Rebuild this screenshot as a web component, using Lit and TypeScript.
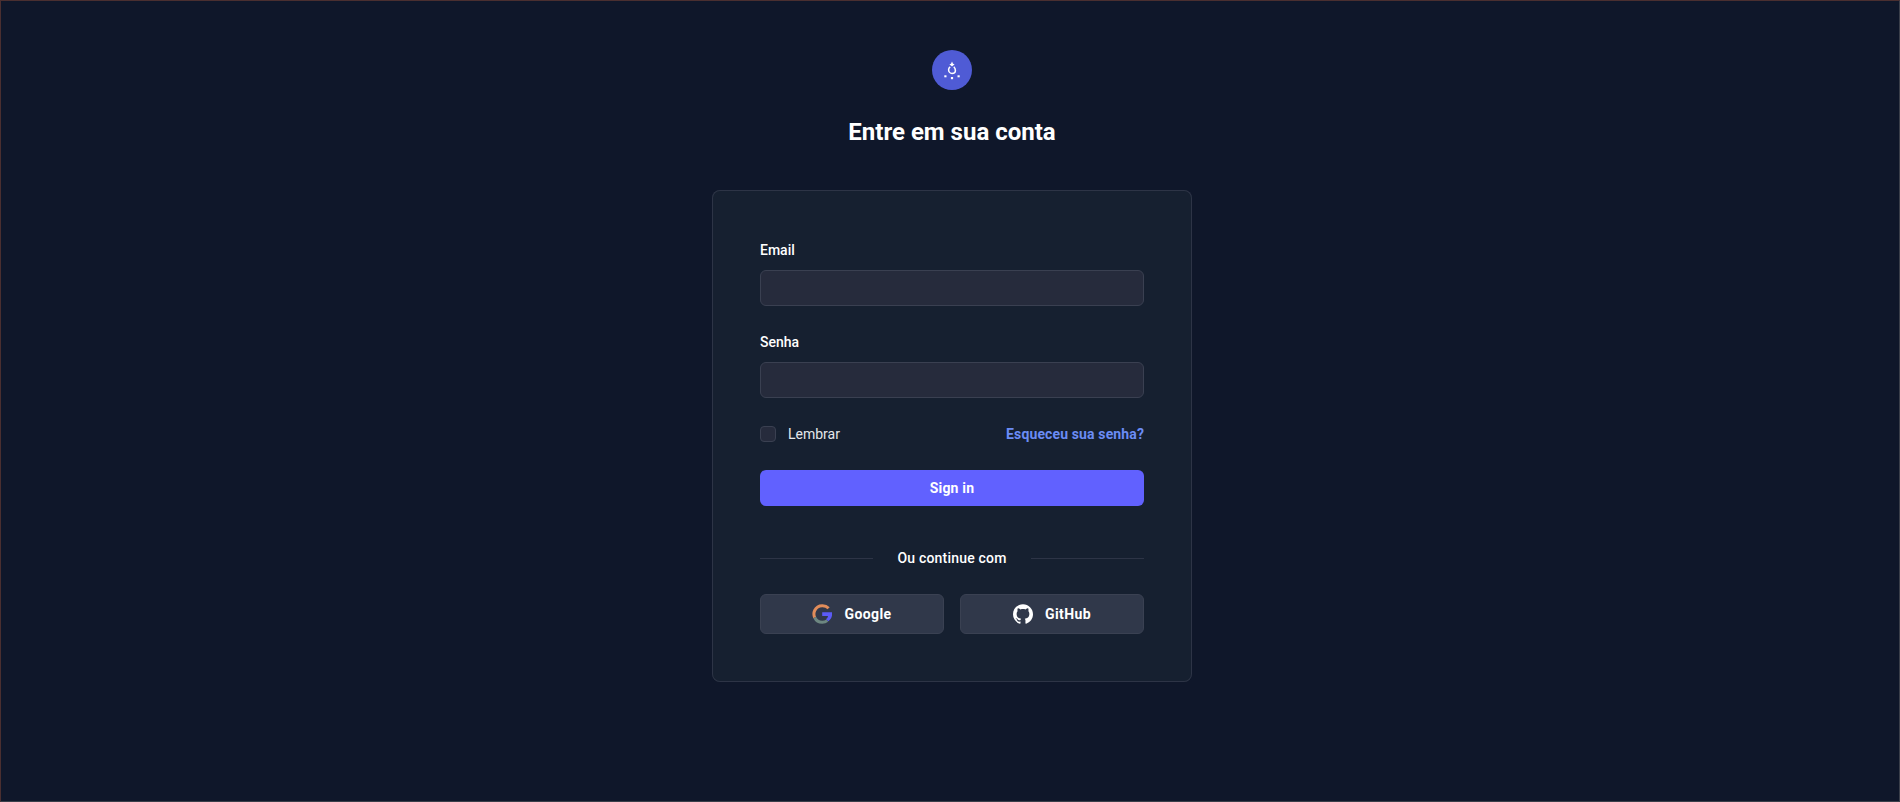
import { css, html, LitElement } from 'lit'
import { customElement } from 'lit/decorators.js'

@customElement('app-root')
export class AppRoot extends LitElement {
  render() {
    return html`
      <main class="page">
        <header class="brand">
          <div class="logo">
            <svg width="40" height="40" viewBox="0 0 40 40" fill="none">
              <path d="M20 11.500l1 2.300 1.600.5-1.400 1.100-1.200 1.100-1.200-1.100-1.400-1.100 1.600-.5z" fill="#fff" />
              <path d="M18.200 16.800c-1.200.9-1.600 2-1.600 3 0 1.900 1.500 3.700 3.400 3.700s3.400-1.200 3.400-3c0-1.300-.6-2.700-1.600-3.700" stroke="#fff" stroke-width="1.500" />
              <rect x="12.300" y="25.300" width="2.200" height="2" fill="#fff" />
              <rect x="18.900" y="27" width="2.200" height="2.200" fill="#fff" />
              <rect x="25.500" y="25.300" width="2.200" height="2" fill="#fff" />
            </svg>
          </div>
          <h1>Entre em sua conta</h1>
        </header>
        <section class="card">
          <form class="form">
            <div class="field">
              <label for="email">Email</label>
              <input id="email" type="email" />
            </div>
            <div class="field">
              <label for="senha">Senha</label>
              <input id="senha" type="password" />
            </div>
            <div class="options">
              <label class="remember"><span class="check"></span>Lembrar</label>
              <a class="forgot" href="#">Esqueceu sua senha?</a>
            </div>
            <button class="submit" type="button">Sign in</button>
          </form>
          <div class="divider"><span class="line"></span><span class="divider-text">Ou continue com</span><span class="line"></span></div>
          <div class="socials">
            <a class="social" href="#">
              <svg width="20" height="20" viewBox="0 0 20 20" fill="none">
                <path d="M16.600 4.300A8.300 8.300 0 0 0 10.300 1.700 8.300 8.300 0 0 0 2.700 6.500 8.300 8.300 0 0 0 2.700 13.500" stroke="#e08c5a" stroke-width="3" />
                <path d="M2.700 13.500A8.300 8.300 0 0 0 10.300 18.300 8.300 8.300 0 0 0 15.300 16.600" stroke="#6d8781" stroke-width="3" />
                <path d="M10.200 8.300H20V11.500C19.600 13.800 18.300 15.700 16.300 17.200L14 15.200C15 14.500 15.800 13.500 16 12H10.200z" fill="#5b5bf6" />
              </svg>
              <span>Google</span>
            </a>
            <a class="social" href="#">
              <svg width="20" height="20" viewBox="0 0 24 24" fill="#fff">
                <path d="M12 .297c-6.630 0-12 5.373-12 12 0 5.303 3.438 9.800 8.205 11.385.6.113.82-.258.82-.577 0-.285-.01-1.040-.015-2.040-3.338.724-4.042-1.610-4.042-1.610C4.422 18.070 3.633 17.700 3.633 17.700c-1.087-.744.084-.729.084-.729 1.205.084 1.838 1.236 1.838 1.236 1.070 1.835 2.809 1.305 3.495.998.108-.776.417-1.305.76-1.605-2.665-.3-5.466-1.332-5.466-5.930 0-1.310.465-2.380 1.235-3.220-.135-.303-.54-1.523.105-3.176 0 0 1.005-.322 3.300 1.230.96-.267 1.980-.399 3-.405 1.020.006 2.040.138 3 .405 2.280-1.552 3.285-1.230 3.285-1.230.645 1.653.24 2.873.12 3.176.765.84 1.230 1.910 1.230 3.220 0 4.610-2.805 5.625-5.475 5.920.42.36.81 1.096.81 2.220 0 1.606-.015 2.896-.015 3.286 0 .315.21.69.825.57C20.565 22.092 24 17.592 24 12.297c0-6.627-5.373-12-12-12" />
              </svg>
              <span>GitHub</span>
            </a>
          </div>
        </section>
      </main>
    `
  }

  static styles = css`
    :host {
      display: block;
      font-family: Roboto, sans-serif;
      color: #fff;
    }

    * {
      box-sizing: border-box;
    }

    .page {
      height: 802px;
      padding-top: 49px;
      padding-left: 4px;
      background: #0f172a;
      border: 1px solid #3a3f4a;
      border-top-color: #4a2f30;
      border-left-color: #4a2f30;
      display: flex;
      flex-direction: column;
      align-items: center;
    }

    .brand {
      display: flex;
      flex-direction: column;
      align-items: center;
      gap: 24px;
    }

    .logo {
      width: 40px;
      height: 40px;
      border-radius: 50%;
      background: #4f5bd5;
    }

    .logo svg {
      display: block;
    }

    h1 {
      margin: 0;
      font-size: 24px;
      line-height: 36px;
      font-weight: 700;
    }

    .card {
      width: 480px;
      margin-top: 40px;
      padding: 48px;
      background: #162030;
      border-radius: 8px;
      box-shadow: inset 0 0 0 1px #2d3446;
    }

    .form {
      display: flex;
      flex-direction: column;
      gap: 24px;
    }

    .field {
      display: flex;
      flex-direction: column;
      gap: 8px;
    }

    label {
      font-size: 14px;
      line-height: 24px;
      font-weight: 500;
    }

    input {
      height: 36px;
      background: #262b3c;
      border: 1px solid #3a4051;
      border-radius: 6px;
    }

    .options {
      display: flex;
      justify-content: space-between;
      align-items: center;
      height: 24px;
    }

    .remember {
      display: flex;
      align-items: center;
      gap: 12px;
      font-weight: 400;
      color: #e5e7eb;
    }

    .check {
      width: 16px;
      height: 16px;
      background: #262b3c;
      border: 1px solid #3a4051;
      border-radius: 4px;
    }

    .forgot {
      font-size: 14px;
      line-height: 24px;
      font-weight: 700;
      letter-spacing: 0.13px;
      color: #6b8cf5;
      text-decoration: none;
    }

    .submit {
      height: 36px;
      border: 0;
      border-radius: 6px;
      background: #6161ff;
      color: #fff;
      font: 700 14px/24px Roboto, sans-serif;
      letter-spacing: 0.2px;
    }

    .divider {
      display: flex;
      align-items: center;
      margin-top: 40px;
    }

    .line {
      flex: 1;
      height: 1px;
      background: #2d3446;
    }

    .divider-text {
      padding: 0 24px;
      font-size: 14px;
      line-height: 24px;
      font-weight: 500;
      letter-spacing: 0.2px;
    }

    .socials {
      display: grid;
      grid-template-columns: 1fr 1fr;
      gap: 16px;
      margin-top: 24px;
    }

    .social {
      display: flex;
      align-items: center;
      justify-content: center;
      gap: 12px;
      height: 40px;
      background: #30384a;
      border: 1px solid #3a4152;
      border-radius: 6px;
      color: #fff;
      font-size: 14px;
      line-height: 24px;
      font-weight: 700;
      letter-spacing: 0.4px;
      text-decoration: none;
    }
  `
}

declare global {
  interface HTMLElementTagNameMap {
    'app-root': AppRoot
  }
}
